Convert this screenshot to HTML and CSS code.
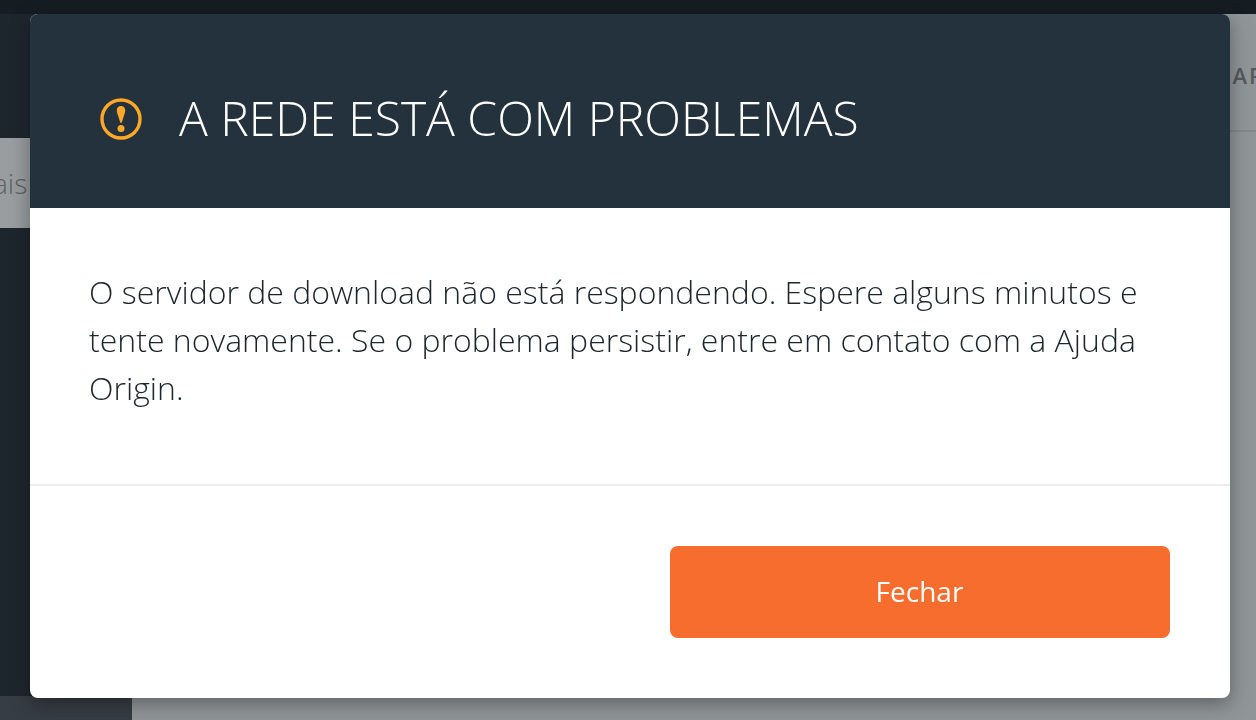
FILE: index.html
```html
<!DOCTYPE html>
<html lang="pt-BR">
<head>
    <meta charset="UTF-8">
    <meta name="viewport" content="width=device-width, initial-scale=1.0">
    <title>Origin</title>
    <link rel="stylesheet" href="styles.css">
</head>
<body>
    <div class="app">
        <div class="topbar"></div>
        <div class="columns">
            <div class="sidebar">
                <div class="sidebar-item">ais</div>
                <div class="sidebar-footer"></div>
            </div>
            <div class="content">
                <div class="content-header">AR</div>
            </div>
        </div>
    </div>

    <div class="overlay">
        <div class="dialog" role="dialog" aria-labelledby="dialog-title">
            <div class="dialog-header">
                <svg class="dialog-icon" viewBox="0 0 64 64" aria-hidden="true">
                    <circle cx="32" cy="33" r="19" fill="none" stroke="#ffa726" stroke-width="3.4"/>
                    <path d="M32 20c2.600 0 4.200 1.700 4.200 4.200 0 1.800-.7 3.900-1.500 6L32.700 36.800h-1.400L29.300 30.200c-.8-2.100-1.500-4.200-1.500-6 0-2.500 1.600-4.200 4.200-4.200z" fill="#ffa726"/>
                    <circle cx="32" cy="42.500" r="3.500" fill="#ffa726"/>
                </svg>
                <h1 class="dialog-title" id="dialog-title">A REDE ESTÁ COM PROBLEMAS</h1>
            </div>
            <div class="dialog-body">
                <p>O servidor de download não está respondendo. Espere alguns minutos e tente novamente. Se o problema persistir, entre em contato com a Ajuda Origin.</p>
            </div>
            <div class="dialog-footer">
                <button type="button" class="btn-primary">Fechar</button>
            </div>
        </div>
    </div>
</body>
</html>
```

FILE: styles.css
```css
* {
    margin: 0;
    padding: 0;
    box-sizing: border-box;
}

html, body {
    height: 100%;
    overflow: hidden;
    font-family: "Open Sans", sans-serif;
}

/* Dimmed page behind the dialog */
.app {
    display: flex;
    flex-direction: column;
    height: 100%;
    background-color: #909598;
}

.topbar {
    height: 14px;
    background-color: #151c22;
}

.columns {
    display: flex;
    flex: 1;
}

.sidebar {
    display: flex;
    flex-direction: column;
    width: 132px;
    padding-top: 124px;
    background-color: #1e262d;
}

.sidebar-item {
    height: 90px;
    background-color: #999d9f;
    color: #5c6266;
    font-size: 28px;
    font-weight: 300;
    line-height: 90px;
    text-indent: -7px;
}

.sidebar-footer {
    height: 24px;
    margin-top: auto;
    background-color: #373d44;
}

.content {
    flex: 1;
    min-width: 0;
}

.content-header {
    display: flex;
    justify-content: flex-end;
    height: 118px;
    border-bottom: 2px solid #83888c;
    color: #53595e;
    font-size: 22px;
    font-weight: 600;
    letter-spacing: 2px;
    line-height: 122px;
    margin-right: -9px;
}

/* Dialog */
.overlay {
    position: fixed;
    inset: 0;
    padding: 14px 26px 22px 30px;
}

.dialog {
    border-radius: 8px;
    background-color: #fff;
    box-shadow: 0 6px 20px rgba(0, 0, 0, 0.35);
    overflow: hidden;
}

.dialog-header {
    display: flex;
    align-items: center;
    gap: 26px;
    padding: 72px 59px 58px;
    background-color: #24323d;
}

.dialog-icon {
    flex: none;
    width: 64px;
    height: 64px;
}

.dialog-title {
    color: #fff;
    font-size: 48px;
    font-weight: 300;
    line-height: 64px;
}

.dialog-body {
    padding: 60px 59px 72px;
    color: #1e262c;
    font-size: 32px;
    font-weight: 300;
    line-height: 48px;
}

.dialog-footer {
    display: flex;
    justify-content: flex-end;
    padding: 60px;
    border-top: 2px solid #ebeded;
}

.btn-primary {
    width: 500px;
    padding: 23px 25px 25px 24px;
    border: none;
    border-radius: 8px;
    background-color: #f76d2d;
    color: #fff;
    font-family: inherit;
    font-size: 28px;
    line-height: 44px;
    cursor: pointer;
}
```
